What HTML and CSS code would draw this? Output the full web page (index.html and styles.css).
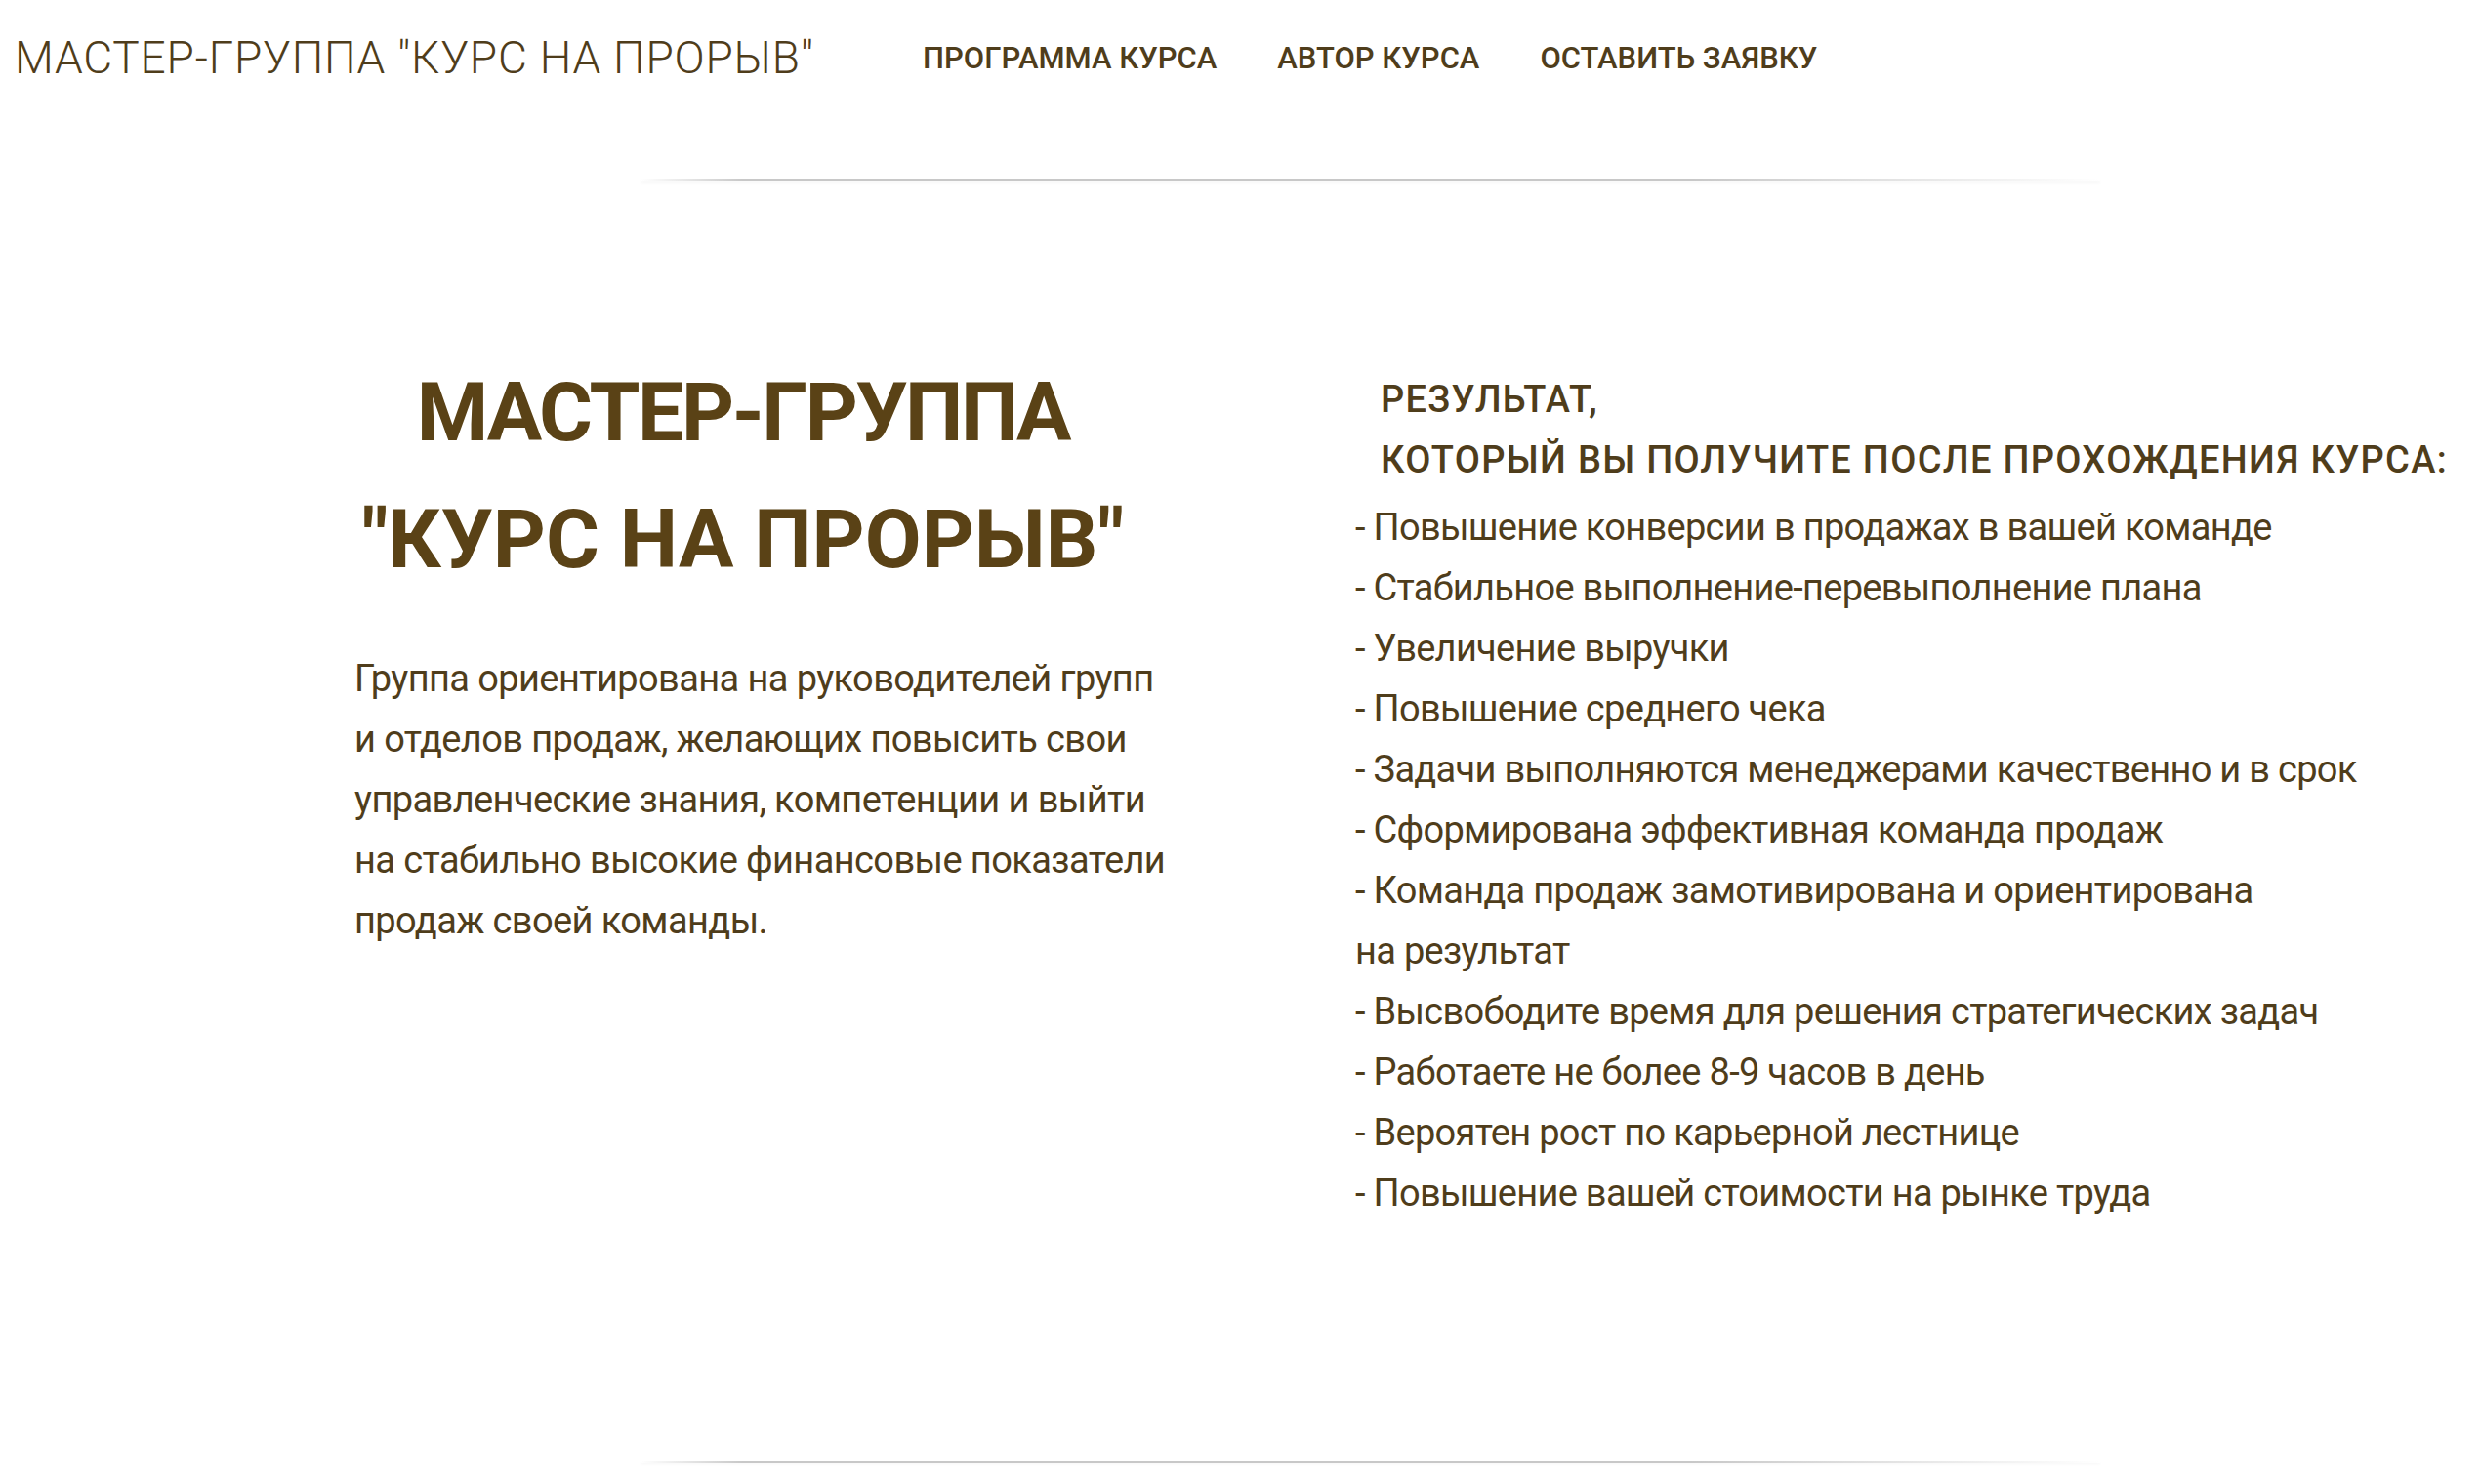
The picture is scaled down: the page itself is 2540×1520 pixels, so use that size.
FILE: index.html
```html
<!DOCTYPE html>
<html lang="ru">
<head>
<meta charset="utf-8">
<title>Мастер-группа "Курс на прорыв"</title>
<link rel="stylesheet" href="styles.css">
</head>
<body>
<header class="topbar">
  <div class="logo">МАСТЕР-ГРУППА "КУРС НА ПРОРЫВ"</div>
  <nav class="menu">
    <a class="menu-item" href="#program">ПРОГРАММА КУРСА</a>
    <a class="menu-item" href="#author">АВТОР КУРСА</a>
    <a class="menu-item" href="#request">ОСТАВИТЬ ЗАЯВКУ</a>
  </nav>
</header>
<div class="rule"></div>
<main class="hero">
  <section class="hero-left">
    <h1 class="title"><span class="title-top">МАСТЕР-ГРУППА</span><br>"КУРС НА ПРОРЫВ"</h1>
    <p class="descr">Группа ориентирована на руководителей групп<br>и отделов продаж, желающих повысить свои<br>управленческие знания, компетенции и выйти<br>на стабильно высокие финансовые показатели<br>продаж своей команды.</p>
  </section>
  <section class="hero-right">
    <h2 class="result-title">РЕЗУЛЬТАТ,<br>КОТОРЫЙ ВЫ ПОЛУЧИТЕ ПОСЛЕ ПРОХОЖДЕНИЯ КУРСА:</h2>
    <div class="result-list">
      <div class="result-item">- Повышение конверсии в продажах в вашей команде</div>
      <div class="result-item">- Стабильное выполнение-перевыполнение плана</div>
      <div class="result-item">- Увеличение выручки</div>
      <div class="result-item">- Повышение среднего чека</div>
      <div class="result-item">- Задачи выполняются менеджерами качественно и в срок</div>
      <div class="result-item">- Сформирована эффективная команда продаж</div>
      <div class="result-item">- Команда продаж замотивирована и ориентирована<br>на результат</div>
      <div class="result-item">- Высвободите время для решения стратегических задач</div>
      <div class="result-item">- Работаете не более 8-9 часов в день</div>
      <div class="result-item">- Вероятен рост по карьерной лестнице</div>
      <div class="result-item">- Повышение вашей стоимости на рынке труда</div>
    </div>
  </section>
</main>
<div class="rule"></div>
</body>
</html>
```
FILE: styles.css
```css
html, body {
  margin: 0;
  padding: 0;
  background: #ffffff;
}

body {
  font-family: "Roboto", "Noto Sans", "Liberation Sans", sans-serif;
  color: #4f3d1b;
  width: 2540px;
  min-height: 1520px;
  overflow: hidden;
}

.topbar {
  display: flex;
  align-items: flex-start;
  height: 147px;
  padding-top: 36px;
  padding-left: 15px;
}

.logo {
  width: 930px;
  font-size: 46px;
  line-height: 46px;
  font-weight: 300;
  letter-spacing: 0.8px;
  color: #4f3d1b;
  white-space: nowrap;
}

.menu {
  display: flex;
  gap: 62px;
  margin-top: 8px;
}

.menu-item {
  font-size: 31px;
  line-height: 31px;
  font-weight: 500;
  color: #4f3d1b;
  text-decoration: none;
  white-space: nowrap;
}

.rule {
  width: 1495px;
  height: 2px;
  margin-left: 656px;
  background: linear-gradient(to right, rgba(200,200,200,0) 0%, #c8c8c8 7%, #c8c8c8 72%, rgba(200,200,200,0) 100%);
  box-shadow: 0 2px 3px rgba(0,0,0,0.04);
}

.hero {
  display: grid;
  grid-template-columns: 796px 1fr;
  column-gap: 229px;
  align-items: start;
  height: 1311px;
  padding-left: 363px;
  box-sizing: border-box;
}

.hero-left {
  padding-top: 173px;
}

.title {
  margin: 0;
  font-size: 84px;
  line-height: 130px;
  font-weight: 700;
  color: #5a4216;
  text-align: center;
  white-space: nowrap;
}

.title-top {
  letter-spacing: -2.4px;
}

.descr {
  margin: 46px 0 0 0;
  font-size: 38px;
  line-height: 62px;
  font-weight: 400;
  letter-spacing: -0.6px;
  color: #4f3d1b;
  white-space: nowrap;
}

.hero-right {
  padding-top: 193px;
}

.result-title {
  margin: 0;
  padding-left: 26px;
  font-size: 38px;
  line-height: 62px;
  font-weight: 500;
  letter-spacing: 1.3px;
  color: #4f3d1b;
  white-space: nowrap;
}

.result-list {
  margin-top: 7px;
}

.result-item {
  font-size: 38px;
  line-height: 62px;
  font-weight: 400;
  letter-spacing: -0.7px;
  color: #4f3d1b;
  white-space: nowrap;
}
```
